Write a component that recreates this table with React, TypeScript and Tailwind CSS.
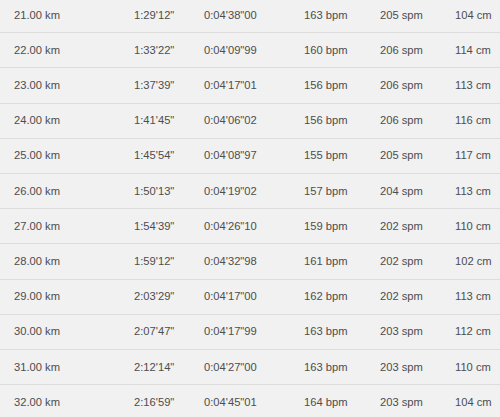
const rows = [
  ["21.00 km", "1:29'12\"", "0:04'38\"00", "163 bpm", "205 spm", "104 cm"],
  ["22.00 km", "1:33'22\"", "0:04'09\"99", "160 bpm", "206 spm", "114 cm"],
  ["23.00 km", "1:37'39\"", "0:04'17\"01", "156 bpm", "206 spm", "113 cm"],
  ["24.00 km", "1:41'45\"", "0:04'06\"02", "156 bpm", "206 spm", "116 cm"],
  ["25.00 km", "1:45'54\"", "0:04'08\"97", "155 bpm", "205 spm", "117 cm"],
  ["26.00 km", "1:50'13\"", "0:04'19\"02", "157 bpm", "204 spm", "113 cm"],
  ["27.00 km", "1:54'39\"", "0:04'26\"10", "159 bpm", "202 spm", "110 cm"],
  ["28.00 km", "1:59'12\"", "0:04'32\"98", "161 bpm", "202 spm", "102 cm"],
  ["29.00 km", "2:03'29\"", "0:04'17\"00", "162 bpm", "202 spm", "113 cm"],
  ["30.00 km", "2:07'47\"", "0:04'17\"99", "163 bpm", "203 spm", "112 cm"],
  ["31.00 km", "2:12'14\"", "0:04'27\"00", "163 bpm", "203 spm", "110 cm"],
  ["32.00 km", "2:16'59\"", "0:04'45\"01", "164 bpm", "203 spm", "104 cm"],
];

export default function App() {
  return (
    <div className="h-[417px] w-[500px] overflow-hidden bg-[#f1f1f1] font-['Liberation_Sans',Arial,sans-serif] text-[11.2px] text-[#4d4d4d]">
      <div className="-mt-[2px]">
        {rows.map((r) => (
          <div
            key={r[0]}
            className="grid h-[35.2px] grid-cols-[120px_70px_100px_76px_75px_1fr] items-center border-b border-[#dcdcdc] pl-[14px]"
          >
            {r.map((c, i) => (
              <div key={i} className="whitespace-nowrap">
                {c}
              </div>
            ))}
          </div>
        ))}
      </div>
    </div>
  );
}
